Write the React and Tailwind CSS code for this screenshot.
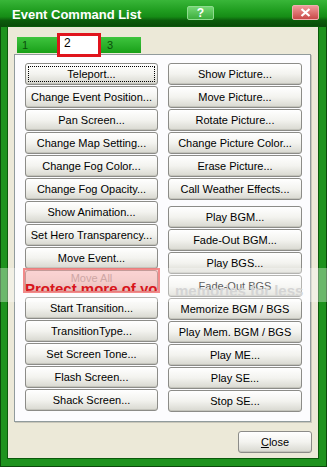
import clsx from "clsx"

const leftCmds = [
  "Teleport...",
  "Change Event Position...",
  "Pan Screen...",
  "Change Map Setting...",
  "Change Fog Color...",
  "Change Fog Opacity...",
  "Show Animation...",
  "Set Hero Transparency...",
  "Move Event...",
  "Move All",
]

const leftCmds2 = [
  "Start Transition...",
  "TransitionType...",
  "Set Screen Tone...",
  "Flash Screen...",
  "Shack Screen...",
]

const rightCmds = [
  "Show Picture...",
  "Move Picture...",
  "Rotate Picture...",
  "Change Picture Color...",
  "Erase Picture...",
  "Call Weather Effects...",
]

const rightCmds2 = [
  "Play BGM...",
  "Fade-Out BGM...",
  "Play BGS...",
  "Fade-Out BGS",
  "Memorize BGM / BGS",
  "Play Mem. BGM / BGS",
  "Play ME...",
  "Play SE...",
  "Stop SE...",
]

function CmdButton({ label, focused, disabled }) {
  return (
    <button
      className={clsx(
        "relative h-[22px] w-full shrink-0 rounded-[3px] border border-[#8c8c88]",
        "bg-linear-to-b from-white via-[#f3f3ef] to-[#d8d8d0]",
        "text-[11px] leading-none shadow-[inset_0_-1px_0_#c4c4bc]",
        disabled ? "pb-[5px] text-[#a3a3a0]" : "text-black"
      )}
    >
      {focused && (
        <div className="absolute inset-[2px] border border-dotted border-black" />
      )}
      {label}
    </button>
  )
}

export default function App() {
  return (
    <div className="relative flex h-[467px] w-[327px] flex-col overflow-hidden bg-[#1e931e] font-['Liberation_Sans',Arial,sans-serif] shadow-[inset_0_0_0_1px_#0b4a0b]">
      {/* title bar */}
      <div className="flex h-[27px] shrink-0 items-start bg-[linear-gradient(to_bottom,#39b639_0%,#22a022_35%,#168d16_62%,#0c5c0c_76%,#0a4a0a_100%)]">
        <span className="ml-[12px] mt-[8px] text-[13px] font-bold leading-[14px] text-white">
          Event Command List
        </span>
        <div className="ml-auto mt-[6px] flex h-[14px] w-[27px] items-center justify-center rounded-[2px] border border-[#8fdc8f] bg-linear-to-b from-[#73d873] to-[#3cae3c] text-[12px] font-bold leading-none text-white">
          ?
        </div>
        <div className="ml-[78px] mr-[8px] mt-[5px] flex h-[15px] w-[27px] items-center justify-center rounded-[2px] border border-[#f0b0b0] bg-linear-to-b from-[#f09a9a] to-[#c84848]">
          <svg width="11" height="9" viewBox="0 0 11 9">
            <path d="M1.5 1 L9.5 8 M9.5 1 L1.5 8" stroke="white" strokeWidth="2.2" />
          </svg>
        </div>
      </div>

      {/* client */}
      <div className="ml-[8px] mr-[9px] mb-[9px] flex flex-1 flex-col bg-[#ece9d8] pl-[6px] pt-[10px] ring-1 ring-[#0b5a0b]">
        <div className="relative ml-[3px] flex h-[16px]">
          <div className="w-[40px] bg-linear-to-b from-[#3ec43e] to-[#16a016] pl-[5px] pt-[3px] text-[11px] leading-none text-[#0b4f0b]">
            1
          </div>
          <div className="w-[44px] bg-white" />
          <div className="w-[40px] bg-linear-to-b from-[#3ec43e] to-[#16a016] pl-[6px] pt-[3px] text-[11px] leading-none text-[#0b4f0b]">
            3
          </div>
          <div className="absolute left-[40px] top-[-4px] flex h-[24px] w-[44px] border-[3px] border-[#e0141c] bg-white pl-[4px] pt-[1px] text-[12px] leading-none text-black">
            2
          </div>
        </div>

        <div className="mt-[1px] flex h-[368px] w-[297px] gap-[10px] border border-[#919b9c] bg-[#fcfcfe] pl-[10px] pt-[8px] shadow-[1px_1px_0_#c9c7ba]">
          <div className="flex w-[133px] flex-col gap-[1px]">
            {leftCmds.map((c, i) => (
              <CmdButton key={c} label={c} focused={i === 0} disabled={c === "Move All"} />
            ))}
            <div className="h-[3px] shrink-0" />
            {leftCmds2.map((c) => (
              <CmdButton key={c} label={c} />
            ))}
          </div>
          <div className="flex w-[134px] flex-col gap-[1px]">
            {rightCmds.map((c) => (
              <CmdButton key={c} label={c} />
            ))}
            <div className="h-[4px] shrink-0" />
            {rightCmds2.map((c) => (
              <CmdButton key={c} label={c} />
            ))}
          </div>
        </div>

        <div className="mr-[6px] mt-[9px] flex justify-end">
          <button className="h-[22px] w-[74px] rounded-[3px] border border-[#8c8c88] bg-linear-to-b from-white via-[#f3f3ef] to-[#d8d8d0] text-[11px] leading-none text-black shadow-[inset_0_-1px_0_#c4c4bc]">
            <span className="underline">C</span>lose
          </button>
        </div>
      </div>

      {/* watermark band */}
      <div className="absolute left-0 top-[268px] h-[34px] w-full bg-white/35" />
      <div className="absolute left-[175px] top-[283px] whitespace-nowrap text-[15px] font-bold leading-none text-[#d4d4d4]">
        memories for less
      </div>
      {/* red highlight */}
      <div className="absolute left-[23px] top-[268px] h-[25px] w-[137px] overflow-hidden border-2 border-[#f07878]/80 bg-[#f05050]/25">
        <div className="absolute left-[0px] top-[11px] whitespace-nowrap text-[15px] font-bold leading-none text-[#d8161c]">
          Protect more of your
        </div>
      </div>
    </div>
  )
}
